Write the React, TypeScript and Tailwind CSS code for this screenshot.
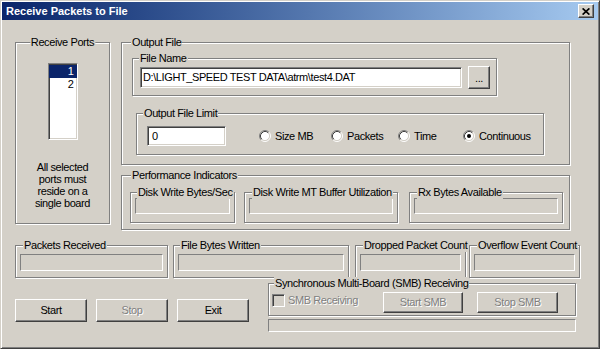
import type { ReactNode } from 'react';

const raised =
  'bg-[#d4d0c8] border border-t-white border-l-white border-r-[#404040] border-b-[#404040] shadow-[inset_-1px_-1px_0_#808080]';
const sunken =
  'bg-white border border-t-[#808080] border-l-[#808080] border-r-white border-b-white shadow-[inset_1px_1px_0_#404040,inset_-1px_-1px_0_#d4d0c8]';
const readout = 'border border-t-[#808080] border-l-[#808080] border-r-white border-b-white';
const grayed = 'text-[#808080] [text-shadow:1px_1px_0_#fff]';

function Group({
  label,
  left = 6,
  className = '',
  children,
}: {
  label: string;
  left?: number | 'center';
  className?: string;
  children?: ReactNode;
}) {
  return (
    <div className={`relative border border-[#808080] shadow-[inset_1px_1px_0_#fff,1px_1px_0_#fff] ${className}`}>
      <span
        className={`absolute -top-[7px] bg-[#d4d0c8] px-[1px] leading-[13px] whitespace-nowrap ${
          left === 'center' ? 'left-1/2 -translate-x-1/2' : ''
        }`}
        style={left === 'center' ? undefined : { left }}
      >
        {label}
      </span>
      {children}
    </div>
  );
}

function Button({
  children,
  disabled,
  className = '',
}: {
  children: ReactNode;
  disabled?: boolean;
  className?: string;
}) {
  return (
    <button
      type="button"
      className={`flex items-center justify-center leading-none ${raised} ${disabled ? grayed : ''} ${className}`}
    >
      {children}
    </button>
  );
}

function Radio({ label, checked, className = '' }: { label: string; checked?: boolean; className?: string }) {
  return (
    <div className={`flex items-center gap-[4px] ${className}`}>
      <svg width="12" height="12" viewBox="0 0 12 12" className="shrink-0">
        <circle cx="6" cy="6" r="4.5" fill="#fff" />
        <path d="M9.89 2.11A5.5 5.5 0 0 0 2.11 9.89" fill="none" stroke="#808080" />
        <path d="M2.11 9.89A5.5 5.5 0 0 0 9.89 2.11" fill="none" stroke="#fff" />
        <path d="M9.18 2.82A4.5 4.5 0 0 0 2.82 9.18" fill="none" stroke="#404040" />
        <path d="M2.82 9.18A4.5 4.5 0 0 0 9.18 2.82" fill="none" stroke="#d4d0c8" />
        {checked && <circle cx="6" cy="6" r="2" fill="#000" />}
      </svg>
      <span>{label}</span>
    </div>
  );
}

function Indicator({ label, className = '', left = 6 }: { label: string; className?: string; left?: number }) {
  return (
    <Group label={label} left={left} className={`h-[33px] px-[4px] pt-[8px] ${className}`}>
      <div className={`h-[17px] ${readout}`} />
    </Group>
  );
}

export default function App() {
  return (
    <div className="w-[600px] h-[349px] overflow-hidden bg-[#d4d0c8] border border-t-[#d4d0c8] border-l-[#d4d0c8] border-r-[#404040] border-b-[#404040] shadow-[inset_1px_1px_0_#fff,inset_-1px_-1px_0_#808080] p-[1px] text-[11px] tracking-[-0.4px] text-black font-['Liberation_Sans',Arial,sans-serif]">
      {/* title bar */}
      <div className="flex items-center justify-between h-[18px] pl-[4px] pr-[4px] bg-linear-to-r from-[#0a246a] to-[#a6caf0]">
        <span className="text-white font-bold text-[11px] tracking-normal leading-none">Receive Packets to File</span>
        <div className={`w-[16px] h-[14px] flex items-center justify-center ${raised}`}>
          <svg width="8" height="7" viewBox="0 0 8 7">
            <path d="M0.6 0.4L7.4 6.6M7.4 0.4L0.6 6.6" stroke="#000" strokeWidth="1.7" />
          </svg>
        </div>
      </div>

      <div className="pl-[13px] pt-[22px]">
        <div className="flex items-start">
          <Group label="Receive Ports" left="center" className="w-[95px] h-[182px] flex flex-col items-center">
            <div className={`mt-[20px] w-[30px] h-[77px] pt-[1px] ${sunken}`}>
              <div className="h-[13px] leading-[13px] bg-[#0a246a] text-white text-right pr-[3px]">1</div>
              <div className="h-[13px] leading-[13px] text-right pr-[3px]">2</div>
            </div>
            <p className="mt-[21px] text-center leading-[12px]">
              All selected
              <br />
              ports must
              <br />
              reside on a
              <br />
              single board
            </p>
          </Group>

          <div className="ml-[11px] w-[449px]">
            <Group label="Output File" left={9} className="h-[123px] pt-[15px] pl-[10px]">
              <Group label="File Name" left={6} className="w-[365px] h-[38px] flex items-center pl-[7px]">
                <div className={`w-[322px] h-[21px] flex items-center pl-[2px] whitespace-nowrap ${sunken}`}>
                  {'D:\\LIGHT_SPEED TEST DATA\\atrm\\test4.DAT'}
                </div>
                <Button className="ml-[6px] w-[22px] h-[23px] pt-[3px]">...</Button>
              </Group>
              <Group label="Output File Limit" left={6} className="mt-[17px] ml-[4px] w-[408px] h-[42px] pt-[12px] pl-[10px]">
                <div className="flex items-center">
                  <div className={`w-[79px] h-[20px] flex items-center pl-[4px] ${sunken}`}>0</div>
                  <Radio label="Size MB" className="ml-[33px] w-[72px]" />
                  <Radio label="Packets" className="w-[67px]" />
                  <Radio label="Time" className="w-[65px]" />
                  <Radio label="Continuous" checked />
                </div>
              </Group>
            </Group>

            <Group label="Performance Indicators" left={9} className="mt-[10px] h-[55px] flex items-start pt-[16px] pl-[8px]">
              <Group label="Disk Write Bytes/Sec" left={6} className="w-[105px] h-[31px] px-[4px] pt-[5px]">
                <div className={`h-[16px] ${readout}`} />
              </Group>
              <Group label="Disk Write MT Buffer Utilization" left={7} className="ml-[9px] w-[154px] h-[31px] px-[4px] pt-[5px]">
                <div className={`h-[16px] ${readout}`} />
              </Group>
              <Group label="Rx Bytes Available" left={7} className="ml-[11px] w-[154px] h-[31px] px-[4px] pt-[5px]">
                <div className={`h-[16px] ${readout}`} />
              </Group>
            </Group>
          </div>
        </div>

        <div className="mt-[15px] flex items-start">
          <Indicator label="Packets Received" left={7} className="w-[153px]" />
          <Indicator label="File Bytes Written" left={6} className="ml-[5px] w-[176px]" />
          <Indicator label="Dropped Packet Count" left={7} className="ml-[6px] w-[111px]" />
          <Indicator label="Overflow Event Count" left={7} className="ml-[3px] w-[111px]" />
        </div>

        <div className="flex items-start">
          <div className="mt-[21px] flex gap-[9px]">
            <Button className="w-[72px] h-[23px]">Start</Button>
            <Button disabled className="w-[72px] h-[23px]">
              Stop
            </Button>
            <Button className="w-[72px] h-[23px]">Exit</Button>
          </div>
          <div className="ml-[19px] mt-[5px] w-[308px]">
            <Group label="Synchronous Multi-Board (SMB) Receiving" left={5} className="h-[33px] flex items-start pt-[8px] pl-[3px]">
              <div className="w-[111px] flex items-center gap-[3px]">
                <div className="w-[13px] h-[13px] bg-[#d4d0c8] border border-t-[#808080] border-l-[#808080] border-r-white border-b-white shadow-[inset_1px_1px_0_#404040,inset_-1px_-1px_0_#d4d0c8]" />
                <span className={grayed}>SMB Receiving</span>
              </div>
              <Button disabled className="w-[80px] h-[21px]">
                Start SMB
              </Button>
              <Button disabled className="ml-[14px] w-[81px] h-[21px]">
                Stop SMB
              </Button>
            </Group>
            <div className={`mt-[3px] h-[13px] ${readout}`} />
          </div>
        </div>
      </div>
    </div>
  );
}
